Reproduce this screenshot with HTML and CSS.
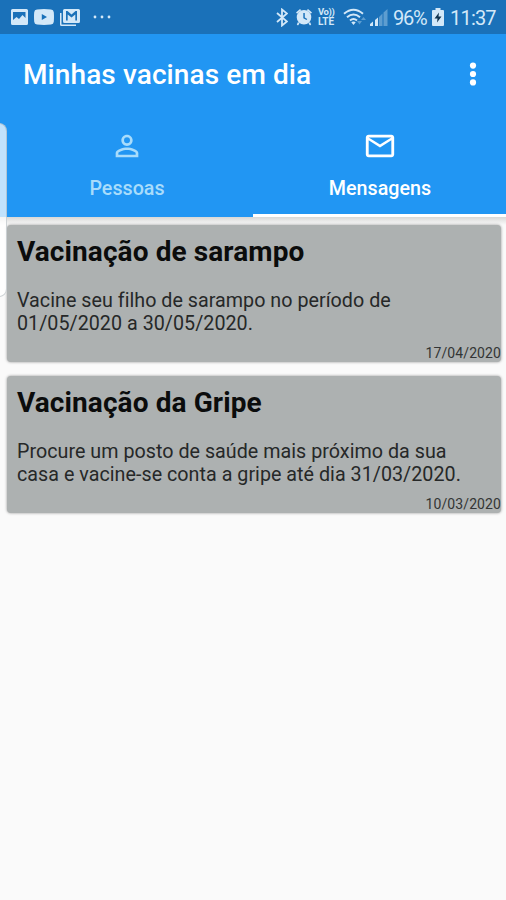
FILE: index.html
```
<!DOCTYPE html>
<html lang="pt-BR">
<head>
    <meta charset="UTF-8">
    <meta name="viewport" content="width=device-width, initial-scale=1.0">
    <title>Minhas vacinas em dia</title>
    <link rel="stylesheet" href="styles.css">
</head>
<body>
    <div class="status-bar">
        <div class="status-left">
            <svg width="17" height="16" viewBox="0 0 17 16">
                <path fill-rule="evenodd" d="M1.5 0h14A1.5 1.5 0 0 1 17 1.5v13a1.5 1.5 0 0 1-1.500 1.500h-14A1.500 1.500 0 0 1 0 14.500v-13A1.500 1.500 0 0 1 1.500 0zM2 3v8l3.500-3 2.500 2 3.500-4 3 3V3z"/>
            </svg>
            <svg width="20" height="16" viewBox="0 0 20 16">
                <path fill-rule="evenodd" d="M3 .5Q10-.3 17 .5q2.600.3 2.800 2.800.4 4.700 0 9.400-.2 2.500-2.800 2.800-7 .8-14 0Q.4 15.200.2 12.700q-.4-4.700 0-9.400Q.4.800 3 .5zM7.800 5v6l5.200-3z"/>
            </svg>
            <svg width="20" height="17" viewBox="0 0 20 17">
                <path d="M0 4h1.500v11.500H16V17H1.500A1.500 1.500 0 0 1 0 15.500z"/>
                <path fill-rule="evenodd" d="M4.500 0h14A1.500 1.500 0 0 1 20 1.500v11a1.500 1.500 0 0 1-1.500 1.500h-14A1.500 1.500 0 0 1 3 12.500v-11A1.500 1.500 0 0 1 4.500 0zM6 2v9.500h1.700V5.500l3.800 3 3.800-3v6H17V2h-1.500l-4 3.500-4-3.500z"/>
            </svg>
            <svg class="more" width="18" height="4" viewBox="0 0 18 4">
                <circle cx="2" cy="2" r="1.400"/>
                <circle cx="9" cy="2" r="1.400"/>
                <circle cx="16" cy="2" r="1.400"/>
            </svg>
        </div>
        <div class="status-right">
            <svg class="bluetooth" width="12" height="19" viewBox="0 0 12 19">
                <path d="M1 5l10 8.500-5 4V1.500l5 4L1 14"/>
            </svg>
            <svg class="alarm" width="18" height="18" viewBox="0 0 18 18">
                <path fill-rule="evenodd" d="M9 2a7.300 7.300 0 1 1 0 14.600A7.300 7.300 0 0 1 9 2zM8.300 5v5.200l3.200 1.900.8-1.200-2.500-1.500V5z"/>
                <path d="M1 4.500L5 1l1.200 1.300-4 3.500zM17 4.500L13 1l-1.200 1.300 4 3.500zM3 14l1.500 1.500L3 17.500l-1.200-1zM15 14l-1.500 1.500 1.500 2 1.200-1z"/>
            </svg>
            <div class="volte"><span class="vo">Vo))</span><span>LTE</span></div>
            <svg class="wifi" width="24" height="18" viewBox="0 0 24 18">
                <g class="waves">
                    <path d="M1 5.800Q10.500-2.300 20 5.800"/>
                    <path d="M4 9.300q6.500-5.500 13 0"/>
                    <path d="M7 12.500q3.500-3 7 0"/>
                </g>
                <path d="M8.300 14.200q2.200-1.600 4.400 0L10.500 17z"/>
                <path class="dim" d="M14 13h5l-2.500 3.500zM18 12l2.500-3L23 12z"/>
            </svg>
            <svg class="signal" width="18" height="17" viewBox="0 0 18 17">
                <path d="M0 15l3-2.500V17H0z"/>
                <path d="M5 11l3-2.500V17H5z"/>
                <path class="dim" d="M9 8l3.500-3.500V17H9zM13.500 3.500L17.500 0v17h-4z"/>
            </svg>
            <span class="percent">96%</span>
            <svg class="battery" width="12" height="18" viewBox="0 0 12 18">
                <path d="M3.500 0h5v2H11a1 1 0 0 1 1 1v14a1 1 0 0 1-1 1H1a1 1 0 0 1-1-1V3a1 1 0 0 1 1-1h2.500z"/>
                <path class="bolt" d="M7 4.500L2.500 10.500h3L5 14.500l4.500-6h-3z"/>
            </svg>
            <span class="clock">11:37</span>
        </div>
    </div>

    <header class="app-bar">
        <div class="toolbar">
            <h1>Minhas vacinas em dia</h1>
            <svg class="menu" width="8" height="24" viewBox="0 0 8 24">
                <circle cx="4" cy="3.600" r="3.100"/>
                <circle cx="4" cy="12" r="3.100"/>
                <circle cx="4" cy="20.400" r="3.100"/>
            </svg>
        </div>
        <nav class="tabs">
            <div class="tab">
                <svg width="34" height="34" viewBox="0 0 24 24">
                    <path d="M12 5.900a2.100 2.100 0 1 1 0 4.200 2.100 2.100 0 0 1 0-4.200m0 9c2.970 0 6.100 1.460 6.100 2.100v1.100H5.900V17c0-.64 3.130-2.100 6.100-2.100M12 4C9.790 4 8 5.790 8 8s1.790 4 4 4 4-1.790 4-4-1.790-4-4-4zm0 9c-2.670 0-8 1.340-8 4v3h16v-3c0-2.660-5.330-4-8-4z"/>
                </svg>
                <span>Pessoas</span>
            </div>
            <div class="tab active">
                <svg width="34" height="34" viewBox="0 0 24 24">
                    <path d="M20 4H4c-1.100 0-1.990.9-1.990 2L2 18c0 1.100.9 2 2 2h16c1.100 0 2-.9 2-2V6c0-1.100-.9-2-2-2zm0 14H4V8l8 5 8-5v10zm-8-7L4 6h16l-8 5z"/>
                </svg>
                <span>Mensagens</span>
            </div>
        </nav>
    </header>

    <main class="messages">
        <article class="card">
            <h2>Vacinação de sarampo</h2>
            <p>Vacine seu filho de sarampo no período de<br>01/05/2020 a 30/05/2020.</p>
            <time>17/04/2020</time>
        </article>
        <article class="card">
            <h2>Vacinação da Gripe</h2>
            <p>Procure um posto de saúde mais próximo da sua<br>casa e vacine-se conta a gripe até dia 31/03/2020.</p>
            <time>10/03/2020</time>
        </article>
    </main>

    <!-- edge panel handle -->
    <div class="edge-handle"></div>
</body>
</html>
```
FILE: styles.css
```
* {
    box-sizing: border-box;
}
body {
    position: relative;
    margin: 0;
    height: 900px;
    overflow: hidden;
    background: #fafafa;
    font-family: Roboto, "Liberation Sans", sans-serif;
    white-space: nowrap;
}
h1, h2, p {
    margin: 0;
}
.status-bar {
    display: flex;
    justify-content: space-between;
    height: 34px;
    padding: 0 10px 0 11px;
    background: #1a71b9;
    color: #d3e8f8;
}
.status-bar svg {
    fill: #d3e8f8;
}
.status-left, .status-right {
    display: flex;
    align-items: center;
}
.status-left {
    gap: 6px;
}
.status-left .more {
    margin-left: 7px;
}
.status-right .bluetooth {
    fill: none;
    stroke: #d3e8f8;
    stroke-width: 1.8;
    margin-right: 7px;
}
.alarm {
    margin-right: 5px;
}
.volte {
    display: flex;
    flex-direction: column;
    width: 18px;
    margin-right: 7px;
    font-size: 10px;
    font-weight: 700;
    line-height: 10px;
}
.volte .vo {
    font-size: 9.5px;
    letter-spacing: -0.4px;
    line-height: 10px;
}
.wifi {
    margin-right: 3px;
}
.waves {
    fill: none;
    stroke: #d3e8f8;
    stroke-width: 2;
}
.status-bar .dim {
    fill: #5d9dd0;
}
.signal {
    margin-right: 5px;
}
.percent, .clock {
    font-size: 20px;
    line-height: 34px;
    padding-top: 2px;
}
.percent {
    width: 34px;
    letter-spacing: -1.2px;
    margin-right: 5px;
}
.battery {
    margin-right: 6px;
}
.status-bar .bolt {
    fill: #10334f;
}
.clock {
    width: 46px;
    letter-spacing: -0.8px;
}
.app-bar {
    height: 183px;
    background: #2196f3;
    color: #fff;
}
.toolbar {
    display: flex;
    align-items: center;
    justify-content: space-between;
    height: 79px;
    padding: 2px 29px 0 23px;
}
.toolbar h1 {
    font-size: 28px;
    font-weight: 500;
    letter-spacing: 0.1px;
}
.menu, .tab svg {
    fill: currentColor;
}
.menu {
    margin-top: -2px;
}
.tabs {
    display: flex;
    height: 104px;
}
.tab {
    flex: 1;
    display: flex;
    flex-direction: column;
    align-items: center;
    padding-top: 16px;
    border-bottom: 3px solid transparent;
    color: #a8dcfb;
    font-size: 19.7px;
    font-weight: 500;
}
.tab span {
    margin-top: 14px;
    padding-left: 1px;
    line-height: 24px;
}
.tab.active {
    color: #fff;
    border-color: #fff;
}
.messages {
    display: flex;
    flex-direction: column;
    gap: 14px;
    padding: 8px 5px 0 7px;
    background: linear-gradient(#d8d8d6, #f2f2f2 6px, #fafafa 8px);
}
.card {
    display: flex;
    flex-direction: column;
    height: 137px;
    padding: 10px 0 0 10px;
    border-radius: 4px;
    background: #adb1b1;
    box-shadow: 0 0 3px rgba(0, 0, 0, 0.4);
}
.card h2 {
    font-size: 28px;
    font-weight: 700;
    line-height: 34px;
    letter-spacing: 0.1px;
    color: #0b0c0c;
}
.card p {
    margin-top: 20px;
    font-size: 19.7px;
    line-height: 23px;
    letter-spacing: 0.03px;
    color: #262828;
}
.card time {
    align-self: flex-end;
    margin-top: 10px;
    font-size: 14px;
    line-height: 16px;
    letter-spacing: 0.1px;
    color: #333535;
}
.edge-handle {
    position: absolute;
    left: -10px;
    top: 123px;
    width: 17px;
    height: 174px;
    border: 1px solid rgba(160, 170, 175, 0.5);
    border-radius: 8px;
    background: rgba(255, 255, 255, 0.72);
}
```
